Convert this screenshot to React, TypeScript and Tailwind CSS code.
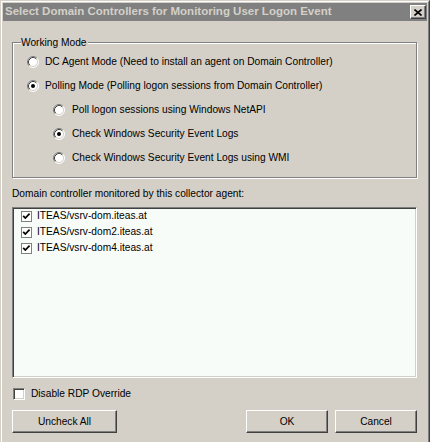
import React from "react";

const font = { fontFamily: '"Liberation Sans", Arial, sans-serif' };

function Radio({ checked }: { checked?: boolean }) {
  return (
    <svg width="12" height="12" viewBox="0 0 12 12" className="shrink-0">
      <circle cx="6" cy="6" r="5" fill="#ffffff" />
      <path d="M2.11 9.89 A5.5 5.5 0 0 1 9.89 2.11" fill="none" stroke="#808080" strokeWidth="1" />
      <path d="M9.89 2.11 A5.5 5.5 0 0 1 2.11 9.89" fill="none" stroke="#ffffff" strokeWidth="1" />
      <path d="M2.82 9.18 A4.5 4.5 0 0 1 9.18 2.82" fill="none" stroke="#404040" strokeWidth="1" />
      <path d="M9.18 2.82 A4.5 4.5 0 0 1 2.82 9.18" fill="none" stroke="#d4d0c8" strokeWidth="1" />
      {checked ? <circle cx="6" cy="6" r="2" fill="#000000" /> : null}
    </svg>
  );
}

function ListCheck() {
  return (
    <svg width="11" height="11" viewBox="0 0 11 11" className="shrink-0">
      <rect x="0.5" y="0.5" width="10" height="10" fill="#ffffff" stroke="#7f7f7f" />
      <polyline points="2.2,4.8 4.3,7 8.6,2.6" fill="none" stroke="#000000" strokeWidth="1.7" />
    </svg>
  );
}

function Button({ label, width }: { label: string; width: string }) {
  return (
    <button
      type="button"
      className={`${width} h-[23px] border border-t-white border-l-white border-r-[#404040] border-b-[#404040] bg-[#d4d0c8] text-[10.2px] text-black shadow-[inset_-1px_-1px_0_#808080]`}
    >
      {label}
    </button>
  );
}

const items = ["ITEAS/vsrv-dom.iteas.at", "ITEAS/vsrv-dom2.iteas.at", "ITEAS/vsrv-dom4.iteas.at"];

export default function App() {
  return (
    <div className="h-[442px] w-[430px] overflow-hidden bg-[#d4d0c8] text-black" style={font}>
      <div className="h-full border-t border-l border-r border-t-[#d4d0c8] border-l-[#d4d0c8] border-r-[#404040]">
        <div className="h-full border-t border-l border-r border-t-white border-l-white border-r-[#808080] p-px">
          {/* title bar */}
          <div className="flex h-[18px] items-center justify-between bg-[#808080] pl-[2px] pr-[1px]">
            <span className="text-[11.5px] font-bold leading-none text-[#d4d0c8]">
              Select Domain Controllers for Monitoring User Logon Event
            </span>
            <div className="flex h-[14px] w-[16px] items-center justify-center border border-t-white border-l-white border-r-[#404040] border-b-[#404040] bg-[#d4d0c8] shadow-[inset_-1px_-1px_0_#808080]">
              <svg width="8" height="7" viewBox="0 0 8 7">
                <path d="M0.5 0.5 L7.5 6.5 M7.5 0.5 L0.5 6.5" stroke="#000" strokeWidth="1.6" />
              </svg>
            </div>
          </div>

          <div className="pl-[9px] text-[10.2px]">
            {/* group box */}
            <div className="relative mt-[21px] h-[136px] w-[405px] border border-[#808080] pt-[7px] shadow-[inset_1px_1px_0_#fff,1px_1px_0_#fff]">
              <span className="absolute left-[8px] top-[-7px] bg-[#d4d0c8] pr-[1px] leading-[13px]">
                Working Mode
              </span>
              <div className="flex h-[24px] items-center gap-[6px] pl-[14px]">
                <Radio />
                <span>DC Agent Mode (Need to install an agent on Domain Controller)</span>
              </div>
              <div className="flex h-[24px] items-center gap-[6px] pl-[14px]">
                <Radio checked />
                <span>Polling Mode (Polling logon sessions from Domain Controller)</span>
              </div>
              <div className="flex h-[24px] items-center gap-[7px] pl-[40px]">
                <Radio />
                <span>Poll logon sessions using Windows NetAPI</span>
              </div>
              <div className="flex h-[24px] items-center gap-[7px] pl-[40px]">
                <Radio checked />
                <span>Check Windows Security Event Logs</span>
              </div>
              <div className="flex h-[24px] items-center gap-[7px] pl-[40px]">
                <Radio />
                <span>Check Windows Security Event Logs using WMI</span>
              </div>
            </div>

            <p className="mt-[9px] leading-[13px]">Domain controller monitored by this collector agent:</p>

            {/* list box */}
            <div className="mt-[7px] h-[171px] w-[405px] border border-t-[#808080] border-l-[#808080] border-r-white border-b-white bg-[#f8fcf8] shadow-[inset_1px_1px_0_#404040,inset_-1px_-1px_0_#d4d0c8]">
              {items.map((item) => (
                <div className="flex h-[16px] items-center gap-[5px] pl-[8px]" key={item}>
                  <ListCheck />
                  <span>{item}</span>
                </div>
              ))}
            </div>

            <div className="mt-[8px] flex h-[16px] items-center gap-[6px] pl-[1px]">
              <div className="h-[12px] w-[12px] border border-t-[#808080] border-l-[#808080] border-r-white border-b-white bg-white shadow-[inset_1px_1px_0_#404040,inset_-1px_-1px_0_#d4d0c8]" />
              <span>Disable RDP Override</span>
            </div>

            <div className="mt-[8px] flex w-[405px] justify-between">
              <Button label="Uncheck All" width="w-[105px]" />
              <div className="flex gap-[7px]">
                <Button label="OK" width="w-[82px]" />
                <Button label="Cancel" width="w-[82px]" />
              </div>
            </div>
          </div>
        </div>
      </div>
    </div>
  );
}
